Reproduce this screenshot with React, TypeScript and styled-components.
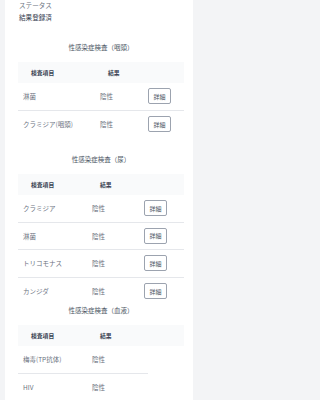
import styled, { createGlobalStyle } from 'styled-components'

const GlobalStyle = createGlobalStyle`
  html, body {
    margin: 0;
    padding: 0;
    background: #f3f4f6;
    font-family: "Noto Sans CJK JP", "Noto Sans", sans-serif;
  }
`

type Row = { name: string; result: string; detail?: boolean }

const sections: { title: string; cols: string; rows: Row[]; gap: number }[] = [
  {
    title: '性感染症検査（咽頭）',
    cols: '77px 48px 1fr',
    gap: 16,
    rows: [
      { name: '淋菌', result: '陰性', detail: true },
      { name: 'クラミジア(咽頭)', result: '陰性', detail: true },
    ],
  },
  {
    title: '性感染症検査（尿）',
    cols: '69px 52px 1fr',
    gap: 0,
    rows: [
      { name: 'クラミジア', result: '陰性', detail: true },
      { name: '淋菌', result: '陰性', detail: true },
      { name: 'トリコモナス', result: '陰性', detail: true },
      { name: 'カンジダ', result: '陰性', detail: true },
    ],
  },
  {
    title: '性感染症検査（血液）',
    cols: '69px 61px 1fr',
    gap: 0,
    rows: [
      { name: '梅毒(TP抗体)', result: '陰性' },
      { name: 'HIV', result: '陰性' },
    ],
  },
]

export default function App() {
  return (
    <>
      <GlobalStyle />
      <Card>
        <Status>
          <Label>ステータス</Label>
          <Value>結果登録済</Value>
        </Status>
        {sections.map((s) => (
          <Section key={s.title} $gap={s.gap}>
            <Title>{s.title}</Title>
            <Table $cols={s.cols}>
              <Head>検査項目</Head>
              <Head>結果</Head>
              <Head />
              {s.rows.map((r, i) => {
                const last = i === s.rows.length - 1
                return (
                  <Line key={r.name}>
                    <Cell $last={last}>{r.name}</Cell>
                    <Cell $last={last}>{r.result}</Cell>
                    {r.detail ? (
                      <Cell $last={last}>
                        <DetailButton>詳細</DetailButton>
                      </Cell>
                    ) : (
                      <Blank />
                    )}
                  </Line>
                )
              })}
            </Table>
          </Section>
        ))}
      </Card>
    </>
  )
}

const Card = styled.div`
  background: #fff;
  width: 188px;
  margin-left: 5px;
  padding: 0 9px 0 13px;
  min-height: 400px;
  box-sizing: border-box;
`

const Status = styled.div`
  display: flex;
  flex-direction: column;
  gap: 3px;
  padding: 1px 0 0 1px;
  margin-bottom: 20px;
`

const Label = styled.div`
  font-size: 6.6px;
  line-height: 9px;
  color: #6b7280;
`

const Value = styled.div`
  font-size: 6.6px;
  line-height: 9px;
  color: #374151;
`

const Section = styled.div<{ $gap: number }>`
  display: flex;
  flex-direction: column;
  margin-bottom: ${(p) => p.$gap}px;
`

const Title = styled.div`
  text-align: center;
  font-size: 6.5px;
  line-height: 9px;
  color: #4b5563;
  padding: 1px 0 10px;
`

const Table = styled.div<{ $cols: string }>`
  display: grid;
  grid-template-columns: ${(p) => p.$cols};
`

const Head = styled.div`
  background: #f9fafb;
  height: 21px;
  display: flex;
  align-items: center;
  padding-left: 13px;
  font-size: 5.8px;
  font-weight: 700;
  color: #374151;
`

const Line = styled.div`
  display: contents;
`

const Cell = styled.div<{ $last?: boolean }>`
  height: 27.5px;
  box-sizing: border-box;
  display: flex;
  align-items: center;
  padding-left: 5px;
  font-size: 6.5px;
  color: #6b7280;
  border-bottom: ${(p) => (p.$last ? 'none' : '1px solid #e5e7eb')};
`

const Blank = styled.div`
  height: 27.5px;
`

const DetailButton = styled.button`
  width: 23px;
  height: 16px;
  padding: 0;
  border: 1px solid #9ca3af;
  border-radius: 2px;
  background: #fff;
  font-family: inherit;
  font-size: 6px;
  color: #4b5563;
`
